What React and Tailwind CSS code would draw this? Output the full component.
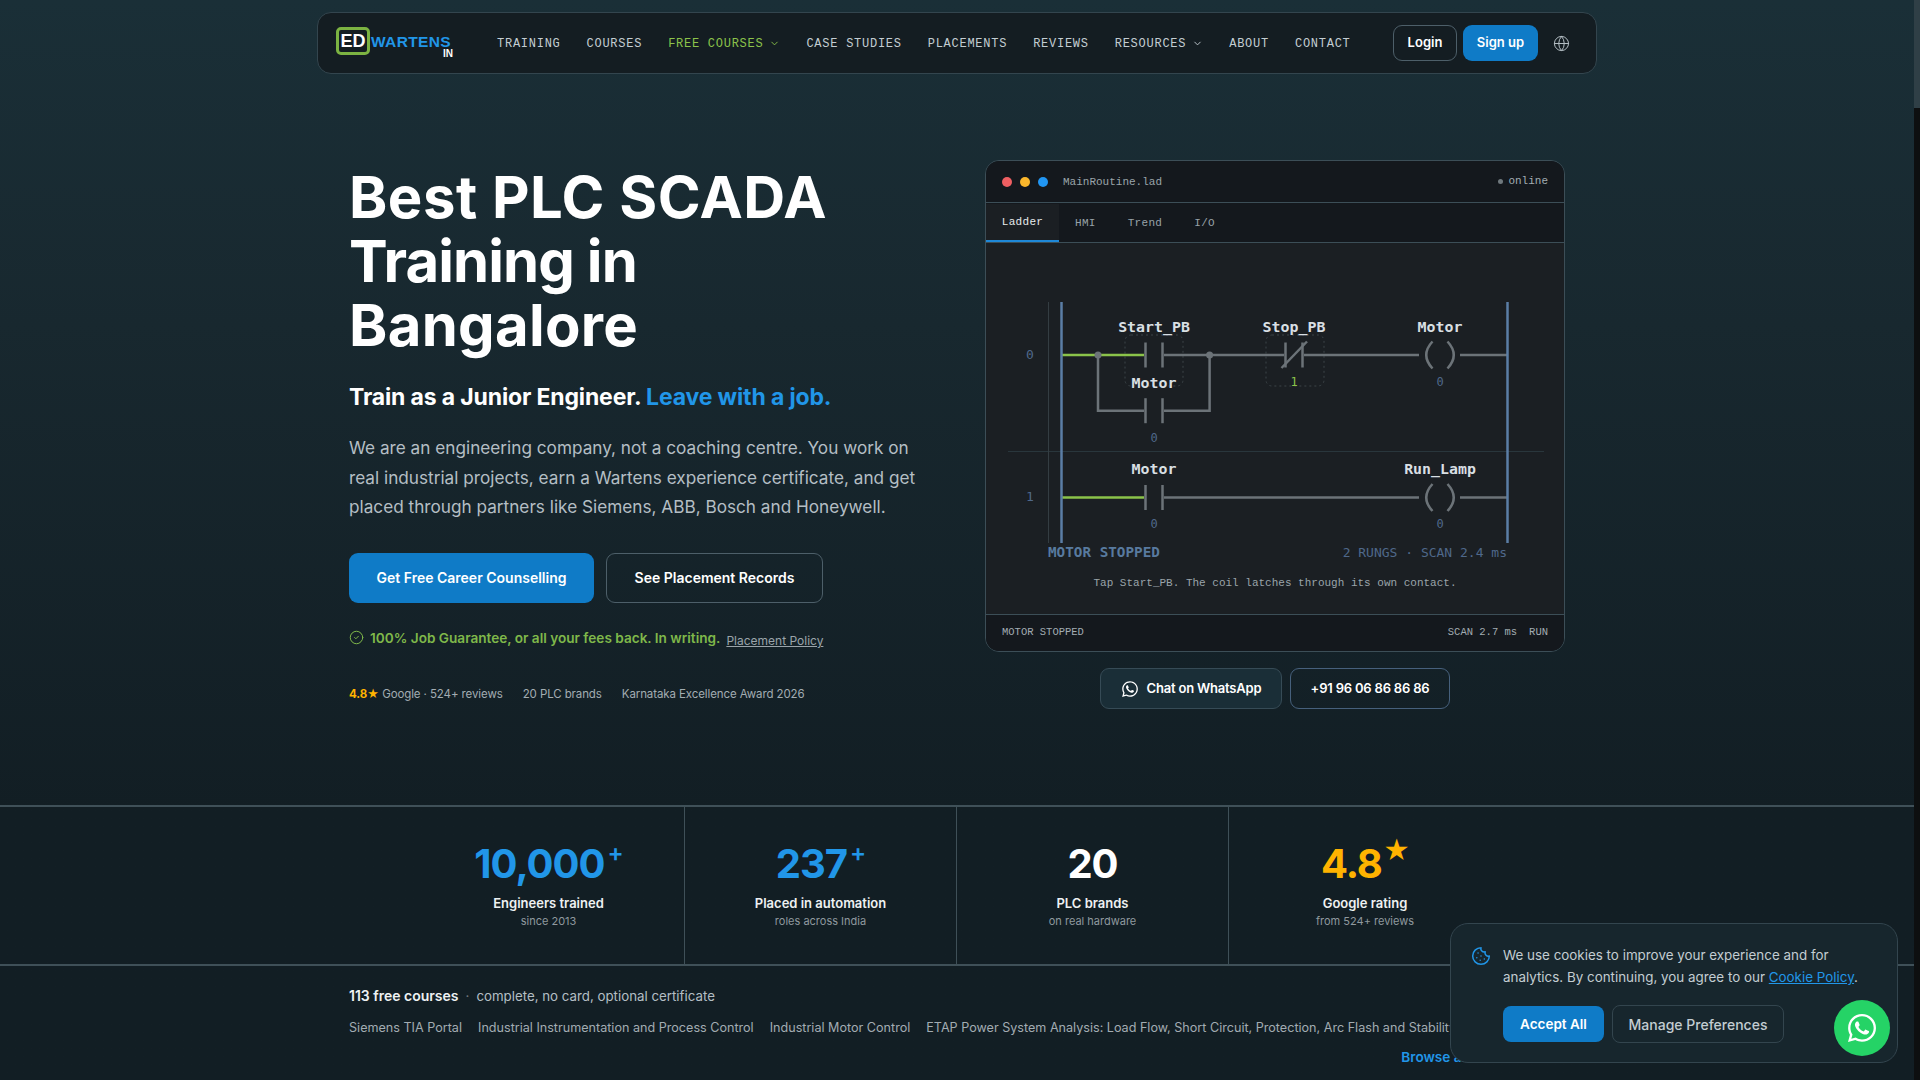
import React from "react";
import { ChevronDown, Globe, CircleCheck, Cookie } from "lucide-react";
import { FaWhatsapp } from "react-icons/fa";

const sans = "font-['Inter','Liberation_Sans',sans-serif]";
const mono = "font-['Liberation_Mono',monospace]";

function NavLink({ children, active, chevron }) {
  return (
    <a className={`flex items-center gap-[6px] pt-[1px] text-[12px] tracking-[0.74px] ${active ? "text-[#8bc34a]" : "text-[#c3cdd2]"}`}>
      {children}
      {chevron && <ChevronDown size={11} strokeWidth={2} />}
    </a>
  );
}

function Nav() {
  return (
    <nav className="mx-auto mt-3 flex h-[62px] w-[1280px] items-center rounded-[14px] border border-[#33454e] bg-[#141d22] pl-[18px] pr-[18px]">
      <div className="relative mt-[-4px] flex h-[30px] w-[117px] items-center">
        <span className="flex h-[28px] w-[34px] items-center justify-center rounded-[5px] border-[3px] border-[#7cb342] bg-[#141d22] font-['Liberation_Sans',sans-serif] text-[18px] font-bold leading-none text-white">ED</span>
        <span className="ml-[1px] mt-[2px] font-['Liberation_Sans',sans-serif] text-[15.5px] font-bold leading-none tracking-[0.35px] text-[#2196e8]">WARTENS</span>
        <span className="absolute right-0 top-[23px] font-['Liberation_Sans',sans-serif] text-[10px] font-bold leading-none text-white">IN</span>
      </div>
      <div className={`ml-[44px] flex items-center gap-[26px] ${mono}`}>
        <NavLink>TRAINING</NavLink>
        <NavLink>COURSES</NavLink>
        <NavLink active chevron>FREE COURSES</NavLink>
        <NavLink>CASE STUDIES</NavLink>
        <NavLink>PLACEMENTS</NavLink>
        <NavLink>REVIEWS</NavLink>
        <NavLink chevron>RESOURCES</NavLink>
        <NavLink>ABOUT</NavLink>
        <NavLink>CONTACT</NavLink>
      </div>
      <div className="ml-auto flex items-center">
        <a className="flex h-9 w-[64px] items-center justify-center rounded-[9px] border border-[#4d5f69] text-[13px] font-semibold text-white">Login</a>
        <a className="ml-[6px] flex h-9 w-[75px] items-center justify-center rounded-[9px] bg-[#0f7bc7] text-[13px] font-semibold text-white">Sign up</a>
        <Globe size={17} strokeWidth={1.4} className="ml-[15px] mr-[8px] text-[#b4bec4]" />
      </div>
    </nav>
  );
}

function Ladder() {
  const wire = "#6c7378";
  const green = "#8bc34a";
  const rail = "#5b7ea6";
  const label = { fontFamily: "'DejaVu Sans Mono',monospace", fontSize: 14.9, fontWeight: 700, fill: "#d9dfe3", textAnchor: "middle" };
  const val = { fontFamily: "'DejaVu Sans Mono',monospace", fontSize: 12, fill: "#4f688a", textAnchor: "middle" };
  const contact = (y) => (
    <g stroke={wire} strokeWidth="2.5">
      <line x1="1145.5" x2="1145.5" y1={y - 12.5} y2={y + 12.5} />
      <line x1="1162.5" x2="1162.5" y1={y - 12.5} y2={y + 12.5} />
    </g>
  );
  const coil = (y) => (
    <g stroke={wire} strokeWidth="2.5" fill="none">
      <path d={`M1432.5 ${y - 13.5} Q1420 ${y} 1432.5 ${y + 13.5}`} />
      <path d={`M1447.5 ${y - 13.5} Q1460 ${y} 1447.5 ${y + 13.5}`} />
    </g>
  );
  return (
    <svg className="block" width="577" height="275" viewBox="986 290 577 275">
      <line x1="1008" x2="1544" y1="451.5" y2="451.5" stroke="#29363c" strokeWidth="1" />
      <line x1="1048.5" x2="1048.5" y1="302" y2="543" stroke="#343d42" strokeWidth="1" />
      <rect x="1125" y="335" width="58" height="51" rx="6" fill="none" stroke="#3c4448" strokeDasharray="2 3" />
      <rect x="1266" y="335" width="58" height="51" rx="6" fill="none" stroke="#3c4448" strokeDasharray="2 3" />
      <g stroke={wire} strokeWidth="2.5" fill="none">
        <line x1="1164" x2="1284" y1="355" y2="355" />
        <line x1="1304" x2="1419" y1="355" y2="355" />
        <line x1="1460" x2="1507" y1="355" y2="355" />
        <path d="M1098 355 V410.7 H1144" />
        <path d="M1164 410.7 H1209.6 V355" />
        <line x1="1164" x2="1419" y1="497.5" y2="497.5" />
        <line x1="1460" x2="1507" y1="497.5" y2="497.5" />
        <line x1="1285.5" x2="1285.5" y1="342.5" y2="367.5" />
        <line x1="1302.5" x2="1302.5" y1="342.5" y2="367.5" />
        <line x1="1281.5" x2="1307" y1="368" y2="341.5" />
      </g>
      <line x1="1062" x2="1144" y1="355" y2="355" stroke={green} strokeWidth="2.5" />
      <line x1="1062" x2="1144" y1="497.5" y2="497.5" stroke={green} strokeWidth="2.5" />
      <circle cx="1098" cy="355" r="3.5" fill={wire} />
      <circle cx="1209.6" cy="355" r="3.5" fill={wire} />
      {contact(355)}
      {contact(410.7)}
      {contact(497.5)}
      {coil(355)}
      {coil(497.5)}
      <line x1="1061.5" x2="1061.5" y1="302" y2="543" stroke={rail} strokeWidth="2.5" />
      <line x1="1507.5" x2="1507.5" y1="302" y2="543" stroke={rail} strokeWidth="2.5" />
      <text x="1154" y="332" style={label}>Start_PB</text>
      <text x="1294" y="332" style={label}>Stop_PB</text>
      <text x="1440" y="332" style={label}>Motor</text>
      <text x="1154" y="388" style={label}>Motor</text>
      <text x="1154" y="474" style={label}>Motor</text>
      <text x="1440" y="474" style={label}>Run_Lamp</text>
      <text x="1154" y="442" style={val}>0</text>
      <text x="1294" y="386" style={{ ...val, fill: green }}>1</text>
      <text x="1440" y="386" style={val}>0</text>
      <text x="1154" y="528" style={val}>0</text>
      <text x="1440" y="528" style={val}>0</text>
      <text x="1030" y="359" style={{ ...val, fontSize: 13 }}>0</text>
      <text x="1030" y="501" style={{ ...val, fontSize: 13 }}>1</text>
      <text x="1048" y="557" style={{ ...val, fontSize: 14.3, fontWeight: 700, fill: "#587a9f", textAnchor: "start" }}>MOTOR STOPPED</text>
      <text x="1507" y="557" style={{ ...val, fontSize: 13, textAnchor: "end" }}>2 RUNGS · SCAN 2.4 ms</text>
    </svg>
  );
}

function Panel() {
  return (
    <div className="w-[580px]">
      <div className={`overflow-hidden rounded-[14px] border border-[#3c4e57] ${mono}`}>
        <div className="flex h-[42px] items-center border-b border-[#3c4e57] bg-[#14181d] pl-[16px] pr-[16px]">
          <span className="h-[10px] w-[10px] rounded-full bg-[#ef5f62]" />
          <span className="ml-[8px] h-[10px] w-[10px] rounded-full bg-[#fbb72c]" />
          <span className="ml-[8px] h-[10px] w-[10px] rounded-full bg-[#2196f3]" />
          <span className="ml-[15px] pt-[1px] text-[11px] text-[#9aa4aa]">MainRoutine.lad</span>
          <span className="ml-auto flex items-center gap-[5px] text-[11px] text-[#a2acb2]">
            <span className="h-[5px] w-[5px] rounded-full bg-[#6f787d]" />online
          </span>
        </div>
        <div className="flex h-[40px] border-b border-[#3c4e57] bg-[#14181d] pt-[1px] text-[11px] tracking-[0.3px]">
          <span className="flex w-[73px] items-center justify-center border-b-2 border-[#1e88d8] bg-[#1b1f23] text-[#e6eaec]">Ladder</span>
          <span className="flex items-center px-4 text-[#98a2a8]">HMI</span>
          <span className="flex items-center px-4 text-[#98a2a8]">Trend</span>
          <span className="flex items-center px-4 text-[#98a2a8]">I/O</span>
        </div>
        <div className="h-[371px] bg-[#1b1f23] pt-[47px]">
          <Ladder />
          <p className="mt-[9px] text-center text-[11px] leading-[18px] text-[#9aa4aa]">Tap Start_PB. The coil latches through its own contact.</p>
        </div>
        <div className="flex h-[37px] items-center justify-between border-t border-[#3c4e57] bg-[#14181d] px-[16px] text-[10.5px] text-[#a2acb2]">
          <span>MOTOR STOPPED</span>
          <span className="flex gap-[12px]"><span>SCAN 2.7 ms</span><span>RUN</span></span>
        </div>
      </div>
      <div className="mt-4 flex justify-center gap-2">
        <a className="flex h-[41px] w-[182px] items-center justify-center gap-[8px] rounded-[9px] border border-[#364b56] bg-[#1a2e37] text-[13px] font-semibold tracking-[-0.2px] text-white">
          <FaWhatsapp size={18} />Chat on WhatsApp
        </a>
        <a className="flex h-[41px] w-[160px] items-center justify-center rounded-[9px] border border-[#46607c] text-[13px] font-semibold tracking-[-0.2px] text-white">+91 96 06 86 86 86</a>
      </div>
    </div>
  );
}

function Hero() {
  return (
    <section className="mx-auto flex h-[731px] w-[1216px] justify-between pt-[86px]">
      <div className="w-[580px] pt-[5px]">
        <h1 className="text-[58px] font-bold leading-[64px] text-white">
          <span className="block tracking-[0.5px]">Best PLC SCADA</span>
          <span className="block tracking-[-0.9px]">Training in</span>
          <span className="block tracking-[0.3px]">Bangalore</span>
        </h1>
        <p className="mt-[25px] text-[23px] font-bold leading-[30px] tracking-[-0.15px] text-white">Train as a Junior Engineer. <span className="text-[#2196e8]">Leave with a job.</span></p>
        <p className="mt-[21px] w-[580px] text-[17.2px] leading-[29.6px] text-[#b4bec4]">We are an engineering company, not a coaching centre. You work on<br />real industrial projects, earn a Wartens experience certificate, and get<br />placed through partners like Siemens, ABB, Bosch and Honeywell.</p>
        <div className="mt-[31px] flex gap-[12px]">
          <a className="flex h-[50px] w-[245px] items-center justify-center rounded-[9px] bg-[#0f7bc7] text-[14px] font-semibold text-white">Get Free Career Counselling</a>
          <a className="flex h-[50px] w-[217px] items-center justify-center rounded-[9px] border border-[#4d5f69] text-[14px] font-semibold text-white">See Placement Records</a>
        </div>
        <div className="mt-[23px] flex items-center text-[13.6px] font-semibold text-[#7fb84a]">
          <CircleCheck size={15} strokeWidth={1.6} />
          <span className="ml-[6px]">100% Job Guarantee, or all your fees back. In writing.</span>
          <a className="ml-[6px] mt-[6px] text-[12px] font-normal text-[#9aa4aa] underline">Placement Policy</a>
        </div>
        <div className="mt-[36px] flex text-[11.5px] tracking-[-0.1px] text-[#a2acb2]">
          <span><b className="font-bold text-[#ffb300]">4.8★</b> Google · 524+ reviews</span>
          <span className="ml-[20px]">20 PLC brands</span>
          <span className="ml-[20px]">Karnataka Excellence Award 2026</span>
        </div>
      </div>
      <Panel />
    </section>
  );
}

function Stat({ value, sup, color, label, sub, last, supClass }) {
  return (
    <div className={`flex flex-col items-center pt-[33px] ${last ? "" : "border-r border-[#3f5058]"}`}>
      <div className={`flex items-start text-[40px] font-bold leading-[48px] tracking-[-1px] ${color}`}>
        {value}<span className={supClass}>{sup}</span>
      </div>
      <div className="mt-[5px] text-[13px] font-semibold leading-[20px] text-[#eef1f2]">{label}</div>
      <div className="text-[11px] leading-[16px] text-[#8f999f]">{sub}</div>
    </div>
  );
}

function Stats() {
  const plus = "ml-[3px] mt-[-1px] text-[24px] font-semibold leading-[28px]";
  return (
    <section className="h-[161px] border-y-2 border-[#3f5058]">
      <div className="mx-auto grid h-full w-[1088px] grid-cols-4">
        <Stat value="10,000" sup="+" supClass={plus} color="text-[#2196e8]" label="Engineers trained" sub="since 2013" />
        <Stat value="237" sup="+" supClass={plus} color="text-[#2196e8]" label="Placed in automation" sub="roles across India" />
        <Stat value="20" sup="" color="text-white" label="PLC brands" sub="on real hardware" />
        <Stat value="4.8" sup="★" supClass="ml-[1px] mt-[-5px] text-[26px] font-semibold leading-[32px]" color="text-[#ffb300]" label="Google rating" sub="from 524+ reviews" last />
      </div>
    </section>
  );
}

function Free() {
  return (
    <section className="mx-auto w-[1216px] pt-[20px]">
      <p className="text-[13.3px] leading-[20px] text-[#b4bec4]"><b className="text-[14px] font-semibold text-[#eef1f2]">113 free courses</b><span className="mx-[7px] text-[#6c7378]">·</span>complete, no card, optional certificate</p>
      <div className="mt-[12px] flex gap-4 whitespace-nowrap text-[12.6px] leading-[20px] text-[#a2acb2]">
        <span>Siemens TIA Portal</span>
        <span>Industrial Instrumentation and Process Control</span>
        <span>Industrial Motor Control</span>
        <span>ETAP Power System Analysis: Load Flow, Short Circuit, Protection, Arc Flash and Stability</span>
      </div>
      <div className="mt-[9px] text-right text-[13.6px] font-semibold leading-[20px] text-[#2196e8]">Browse all 113 courses →</div>
    </section>
  );
}

export default function App() {
  return (
    <div className={`relative h-[1080px] w-[1920px] overflow-hidden bg-gradient-to-b from-[#1a2f37] from-0% via-[#18282f] via-30% to-[#121e24] to-75% ${sans}`}>
      <div className="w-[1914px]">
        <Nav />
        <Hero />
        <Stats />
        <Free />
      </div>

      <div className="absolute right-0 top-0 h-full w-[6px] bg-[#0d0f10]">
        <div className="h-[108px] bg-[#2f3f46]" />
      </div>

      <div className="fixed bottom-[17px] left-[1450px] h-[140px] w-[448px] rounded-[18px] border border-[#33454e] bg-[#17262d] pl-[52px] pt-[20px]">
        <Cookie size={20} strokeWidth={1.8} className="absolute left-[20px] top-[22px] text-[#2196e8]" />
        <p className="text-[13.4px] leading-[22px] text-[#c3cdd2]">We use cookies to improve your experience and for<br />analytics. By continuing, you agree to our <a className="text-[#2196e8] underline">Cookie Policy</a>.</p>
        <div className="mt-[17px] flex items-center gap-2">
          <a className="flex h-9 w-[101px] items-center justify-center rounded-[8px] bg-[#0f7bc7] text-[13.5px] font-semibold text-white">Accept All</a>
          <a className="flex h-[38px] w-[172px] items-center justify-center rounded-[8px] border border-[#33454e] text-[14px] font-medium text-[#c3cdd2]">Manage Preferences</a>
        </div>
      </div>
      <div className="fixed bottom-[24px] left-[1834px] flex h-[56px] w-[56px] items-center justify-center rounded-full bg-[#25d366] text-white">
        <FaWhatsapp size={32} />
      </div>
    </div>
  );
}
